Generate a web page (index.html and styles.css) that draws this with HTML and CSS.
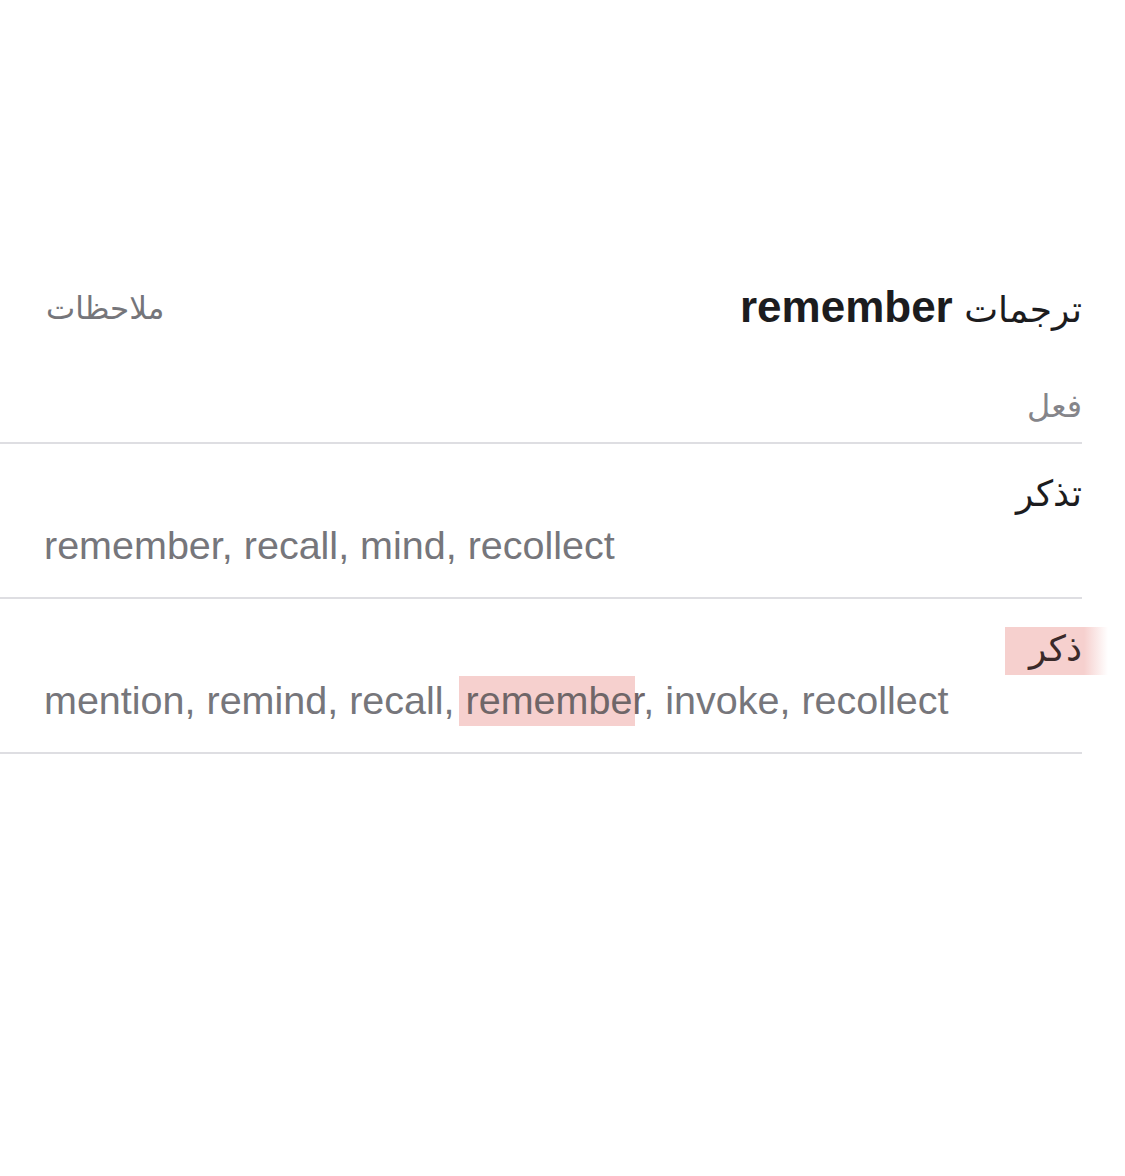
FILE: index.html
```html
<!DOCTYPE html>
<html lang="ar" dir="rtl">
<head>
<meta charset="utf-8">
<link rel="stylesheet" href="styles.css">
</head>
<body>
<main class="page">
  <header class="head">
    <h1 class="title">ترجمات <b class="word">remember</b></h1>
    <span class="notes">ملاحظات</span>
  </header>
  <div class="pos">فعل</div>
  <ul class="list">
    <li class="entry">
      <div class="ar">تذكر</div>
      <div class="en" dir="ltr">remember, recall, mind, recollect</div>
    </li>
    <li class="entry">
      <div class="ar"><span class="mark-ar">ذكر</span></div>
      <div class="en" dir="ltr">mention, remind, recall, <span class="mark-en">remember</span>, invoke, recollect</div>
    </li>
  </ul>
</main>
</body>
</html>
```
FILE: styles.css
```css
html, body {
  margin: 0;
  padding: 0;
  background: #ffffff;
}
body {
  font-family: "DejaVu Sans", "Liberation Sans", sans-serif;
  color: #1c1c1e;
}
.page {
  padding-top: 280px;
}
.head {
  display: flex;
  justify-content: space-between;
  align-items: center;
  padding: 0 43px 0 46px;
  height: 56px;
}
.title {
  margin: 0;
  font-weight: 400;
  font-size: 36px;
  color: #1c1c1e;
  line-height: 56px;
}
.word {
  font-family: "Liberation Sans", sans-serif;
  font-weight: 700;
  font-size: 44px;
}
.notes {
  font-size: 31px;
  color: #75757a;
  line-height: 56px;
}
.pos {
  padding: 0 43px 0 0;
  margin-top: 40px;
  font-size: 32px;
  color: #85858a;
  line-height: 60px;
  height: 66px;
}
.list {
  list-style: none;
  margin: 0 43px 0 0;
  padding: 0;
  border-bottom: 2px solid #dedee2;
}
.entry {
  border-top: 2px solid #dedee2;
  height: 155px;
  padding-top: 27px;
  box-sizing: border-box;
}
.ar {
  font-size: 36px;
  line-height: 46px;
  height: 46px;
  color: #1c1c1e;
  text-align: right;
}
.mark-ar {
  display: inline-block;
  padding: 0 26px 4px 24px;
  margin-right: -26px;
  background: linear-gradient(to left, rgba(246, 208, 206, 0) 0, #f6d0ce 24px);
  line-height: 44px;
  color: #3a2a2a;
}
.en {
  font-family: "Liberation Sans", sans-serif;
  font-size: 39.5px;
  color: #76767b;
  text-align: left;
  padding-left: 44px;
  line-height: 56px;
}
.mark-en {
  padding: 2px 0 4px 7px;
  margin-left: -7px;
  background: linear-gradient(#f6d0ce, #f6d0ce) no-repeat left top / calc(100% - 8px) 100%;
  color: #6f6668;
}
```
